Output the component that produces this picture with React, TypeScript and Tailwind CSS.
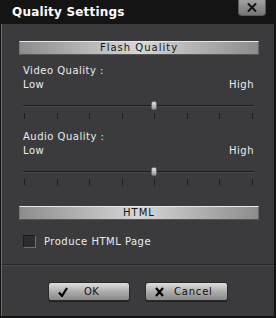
import React from "react";

const font = { fontFamily: '"DejaVu Sans", Verdana, sans-serif' };

const SectionBar = ({ label }: { label: string }) => (
  <div className="h-[14px] w-[240px] flex items-center justify-center border-t border-t-[#e8e8e8] border-b border-b-[#555] border-l border-l-[#777] border-r border-r-[#666] bg-[linear-gradient(to_right,#8c8c8c,#d6d6d6_50%,#8c8c8c)] text-[10px] leading-none tracking-[1px] text-[#161616]">
    {label}
  </div>
);

const Slider = ({ pos }: { pos: number }) => {
  const ticks = [0, 1, 2, 3, 4, 5, 6, 7];
  return (
    <div className="relative w-[231px] ml-[21px] h-[27px]">
      <div className="absolute left-0 right-0 top-[13px] h-[1px] bg-[#1c1c1c]" />
      <div className="absolute left-0 right-0 top-[14px] h-[1px] bg-[#4a4a4a]" />
      <div
        className="absolute top-[9px] w-[6px] h-[9px] rounded-[2px] border border-[#6a6a6a] bg-[linear-gradient(#e0e0e0,#9a9a9a)]"
        style={{ left: pos - 3 }}
      />
      <div className="absolute left-[1px] right-[1px] top-[21px] flex justify-between">
        {ticks.map((t) => (
          <div key={t} className="w-[1px] h-[6px] bg-[#1e1e1e]" />
        ))}
      </div>
    </div>
  );
};

export default function App() {
  return (
    <div className="w-[276px] h-[318px] bg-[#141414] flex flex-col" style={font}>
      {/* title bar */}
      <div className="h-[24px] flex justify-between">
        <div className="pl-[12px] pt-[4px] text-[12px] font-bold text-white leading-[16px] tracking-[0.2px]">
          Quality Settings
        </div>
        <div className="mr-[10px] w-[28px] h-[16px] rounded-b-[4px] bg-[linear-gradient(#a0a0a0,#767676)] border-x border-b border-[#5a5a5a] flex items-center justify-center">
          <svg width="10" height="9" viewBox="0 0 10 9">
            <path d="M1 0.5 L9 8.5 M9 0.5 L1 8.5" stroke="#111" strokeWidth="2" />
          </svg>
        </div>
      </div>

      {/* body */}
      <div className="ml-[1px] mr-[2px] mb-[2px] flex-1 bg-[#3b3b3d] border-l border-l-[#6a6a6a] flex flex-col text-[10px] tracking-[0.5px] text-[#ececec]">
        <div className="h-[241px] border-b border-b-[#262626] flex flex-col">
          <div className="ml-[17px] mt-[17px]">
            <SectionBar label="Flash Quality" />
          </div>

          <div className="mt-[9px] ml-[21px] h-[14px] leading-[14px]">Video Quality :</div>
          <div className="ml-[21px] w-[231px] h-[14px] leading-[14px] flex justify-between">
            <span>Low</span>
            <span>High</span>
          </div>
          <Slider pos={131} />

          <div className="mt-[11px] ml-[21px] h-[14px] leading-[14px]">Audio Quality :</div>
          <div className="ml-[21px] w-[231px] h-[14px] leading-[14px] flex justify-between">
            <span>Low</span>
            <span>High</span>
          </div>
          <Slider pos={131} />

          <div className="ml-[17px] mt-[21px]">
            <SectionBar label="HTML" />
          </div>

          <div className="mt-[14px] ml-[21px] flex items-center gap-[8px]">
            <div className="w-[13px] h-[13px] bg-[#2c2c2c] border border-t-[#1c1c1c] border-l-[#1c1c1c] border-b-[#6e6e6e] border-r-[#6e6e6e]" />
            <span className="text-[10px]">Produce HTML Page</span>
          </div>
        </div>
        <div className="h-[1px] bg-[#4a4a4c]" />

        <div className="mt-[16px] ml-[46px] flex gap-[15px]">
          <button className="w-[82px] h-[19px] rounded-[3px] border border-[#2a2a2a] bg-[linear-gradient(#dedede,#a8a8a8_55%,#8a8a8a)] flex items-center text-[10px] text-[#111] shadow-[0_1px_0_#222]">
            <svg className="ml-[9px]" width="10" height="10" viewBox="0 0 10 10">
              <path d="M1 5.5 L4 9 L9 1" stroke="#000" strokeWidth="2.2" fill="none" />
            </svg>
            <span className="ml-[16px]">OK</span>
          </button>
          <button className="w-[83px] h-[19px] rounded-[3px] border border-[#2a2a2a] bg-[linear-gradient(#dedede,#a8a8a8_55%,#8a8a8a)] flex items-center text-[10px] text-[#111] shadow-[0_1px_0_#222]">
            <svg className="ml-[9px]" width="9" height="10" viewBox="0 0 9 10">
              <path d="M1 1 L8 9 M8 1 L1 9" stroke="#000" strokeWidth="2.2" />
            </svg>
            <span className="ml-[10px] tracking-[0.8px]">Cancel</span>
          </button>
        </div>
      </div>
    </div>
  );
}
